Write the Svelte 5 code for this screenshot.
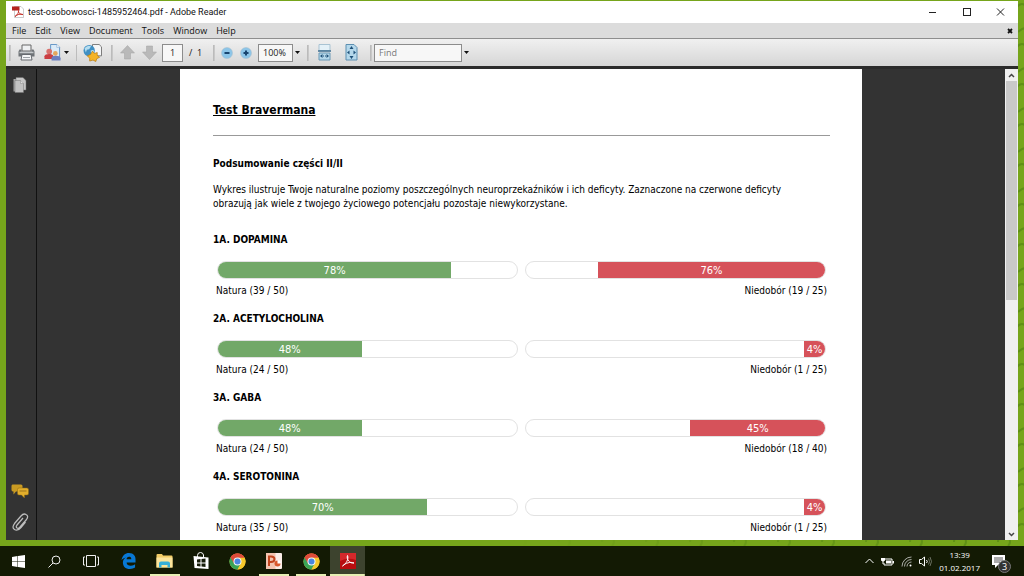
<script lang="ts">
    type Result = {
        name: string
        natura: number
        naturaPoints: string
        niedobor: number
        niedoborPoints: string
    }

    const menuItems = ['File', 'Edit', 'View', 'Document', 'Tools', 'Window', 'Help']

    const results: Result[] = [
        { name: '1A. DOPAMINA', natura: 78, naturaPoints: '39 / 50', niedobor: 76, niedoborPoints: '19 / 25' },
        { name: '2A. ACETYLOCHOLINA', natura: 48, naturaPoints: '24 / 50', niedobor: 4, niedoborPoints: '1 / 25' },
        { name: '3A. GABA', natura: 48, naturaPoints: '24 / 50', niedobor: 45, niedoborPoints: '18 / 40' },
        { name: '4A. SEROTONINA', natura: 70, naturaPoints: '35 / 50', niedobor: 4, niedoborPoints: '1 / 25' }
    ]

    let pageNumber = $state('1')
    let zoom = $state('100%')
    let query = $state('')
</script>

{#snippet chrome()}
    <svg width="17" height="17" viewBox="0 0 34 34">
        <circle cx="17" cy="17" r="16" fill="#f6c82c" />
        <path d="M17 17 L3.1 9 A16 16 0 0 1 30.9 9 Z" fill="#dd4b3a" />
        <path d="M17 17 L3.1 9 A16 16 0 0 0 17 33 L24 21 Z" fill="#3aa357" />
        <path d="M17 9 H30.9 A16 16 0 0 1 17 33 L24 21 Z" fill="#f6c82c" />
        <path d="M3.1 9 A16 16 0 0 1 30.9 9 H17 L10 21 Z" fill="#dd4b3a" />
        <circle cx="17" cy="17" r="8" fill="#f4f6f4" />
        <circle cx="17" cy="17" r="6" fill="#4a86e0" />
    </svg>
{/snippet}

{#snippet arrowDown()}
    <svg width="5" height="3" viewBox="0 0 5 3"><path d="M0 0 H5 L2.5 3 Z" fill="#111" /></svg>
{/snippet}

<div class="desktop">
    <svg class="wallpaper" width="100%" height="100%" aria-hidden="true">
        <defs>
            <pattern id="doodles" width="44" height="40" patternUnits="userSpaceOnUse">
                <path d="M4 8 q6 -8 12 0 t12 2 M30 22 a6 6 0 1 1 10 4 M6 32 q8 -8 16 0 M24 6 a5 5 0 1 0 8 -2" fill="none" stroke="#568713" stroke-width="2" />
            </pattern>
            <linearGradient id="doodleFade">
                <stop offset="0.5" stop-color="#fff" stop-opacity="0" />
                <stop offset="0.95" stop-color="#fff" stop-opacity="0.7" />
            </linearGradient>
            <mask id="fadeMask"><rect width="100%" height="100%" fill="url(#doodleFade)" /></mask>
        </defs>
        <rect width="100%" height="100%" fill="url(#doodles)" mask="url(#fadeMask)" />
    </svg>

    <main class="window">
        <header class="titleBar">
            <svg width="12" height="12" viewBox="0 0 24 24">
                <path d="M5 1 H18 L23 6 V23 H5 Z" fill="#fff" stroke="#999" />
                <rect x="0" y="1" width="15" height="8" fill="#b5231c" />
                <path d="M6 21 C11 18 14 12 13 9 C12 13 17 18 22 17 C17 15 10 17 6 21" fill="none" stroke="#c4322b" stroke-width="2" />
            </svg>
            <span class="title">test-osobowosci-1485952464.pdf - Adobe Reader</span>
            <div class="windowButtons">
                <button aria-label="Minimize"><svg width="9" height="9" viewBox="0 0 9 9"><path d="M1 4.5 H8" stroke="#222" /></svg></button>
                <button aria-label="Maximize"><svg width="9" height="9" viewBox="0 0 9 9"><rect x="1.5" y="0.5" width="7" height="7" fill="none" stroke="#222" /></svg></button>
                <button aria-label="Close"><svg width="9" height="9" viewBox="0 0 9 9"><path d="M1 0.500 L8 7.500 M8 0.500 L1 7.500" stroke="#222" /></svg></button>
            </div>
        </header>

        <nav class="menuBar">
            {#each menuItems as item}
                <button>{item}</button>
            {/each}
            <button class="closeDocument" aria-label="Close document">
                <svg width="6" height="6" viewBox="0 0 6 6"><path d="M1 1 L5 5 M5 1 L1 5" stroke="#111" stroke-width="1.8" /></svg>
            </button>
        </nav>

        <div class="toolbar">
            <span class="grip"></span>
            <button class="tool" aria-label="Print">
                <svg width="17" height="17" viewBox="0 0 34 34">
                    <path d="M8 2 H26 V14 H8 Z" fill="#eef0f2" stroke="#666" stroke-width="2" />
                    <path d="M3 11 H7 V15 H27 V11 H31 L33 15 V25 H1 V15 Z" fill="#6f7377" />
                    <path d="M3 17 H31" stroke="#c4c8cb" stroke-width="3" />
                    <path d="M8 21 H26 L28 32 H6 Z" fill="#f5f6f7" stroke="#666a6f" stroke-width="2" />
                    <path d="M10 27 H24" stroke="#9da2a7" stroke-width="2" />
                </svg>
            </button>
            <button class="tool share" aria-label="Share">
                <svg width="17" height="17" viewBox="0 0 36 36">
                    <path d="M14 1 H27 L33 7 V30 H14 Z" fill="#dcebf8" stroke="#5e90c4" stroke-width="2" />
                    <path d="M27 1 V7 H33" fill="#fff" stroke="#5e90c4" />
                    <circle cx="11" cy="16" r="6" fill="#d9706c" />
                    <path d="M1 32 V26 Q2 21 11 21 Q19 21 20 26 V32 Z" fill="#cb3e42" />
                    <circle cx="24" cy="20" r="5" fill="#e4a65d" />
                    <path d="M16 35 V30 Q17 25 25 25 Q34 25 35 30 V35 Z" fill="#6b7fc0" />
                </svg>
                {@render arrowDown()}
            </button>
            <span class="separator"></span>
            <button class="tool online" aria-label="Create PDF online">
                <svg width="19" height="18" viewBox="0 0 40 38">
                    <path d="M20 1 H34 L39 6 V25 H20 Z" fill="#f5f6f7" stroke="#777" stroke-width="2" />
                    <circle cx="13" cy="14" r="12" fill="#3f8fc3" />
                    <path d="M3 9 Q10 1 17 5 L13 11 L8 12 L6 18 Z M16 14 Q22 11 24 16 L18 23 Z" fill="#b6def0" />
                    <path d="M20 15 L24 20 L30 18 L30 24 L35 28 L29 31 L27 37 L21 34 L14 36 L14 30 L9 25 L16 22 Z" fill="#f4b326" stroke="#b97b10" stroke-width="1.5" />
                </svg>
            </button>
            <span class="grip"></span>
            <button class="tool" aria-label="Previous page">
                <svg width="15" height="15" viewBox="0 0 30 30"><path d="M15 1 L29 16 H21 V28 H9 V16 H1 Z" fill="#b9b9b9" stroke="#a3a3a3" /></svg>
            </button>
            <button class="tool" aria-label="Next page">
                <svg width="15" height="15" viewBox="0 0 30 30"><path d="M15 29 L29 14 H21 V2 H9 V14 H1 Z" fill="#b9b9b9" stroke="#a3a3a3" /></svg>
            </button>
            <input class="pageField" aria-label="Page number" bind:value={pageNumber} />
            <span class="pageCount">/&nbsp; 1</span>
            <span class="grip"></span>
            <button class="zoomButton" aria-label="Zoom out">
                <svg width="12" height="12" viewBox="0 0 24 24"><circle cx="12" cy="12" r="11" fill="#8cc5e8" stroke="#a6bccb" /><path d="M7 12 H17" stroke="#19456f" stroke-width="4" /></svg>
            </button>
            <button class="zoomButton" aria-label="Zoom in">
                <svg width="12" height="12" viewBox="0 0 24 24"><circle cx="12" cy="12" r="11" fill="#8cc5e8" stroke="#a6bccb" /><path d="M7 12 H17 M12 7 V17" stroke="#19456f" stroke-width="4" /></svg>
            </button>
            <div class="combo">
                <input class="zoomField" aria-label="Zoom" bind:value={zoom} />
                <button aria-label="Zoom levels">{@render arrowDown()}</button>
            </div>
            <span class="grip"></span>
            <button class="tool fit" aria-label="Fit width">
                <svg width="13" height="17" viewBox="0 0 26 34">
                    <path d="M2 1 H24 V13 H2 Z" fill="#e4f1f8" stroke="#a9c3d3" stroke-width="2" />
                    <path d="M0 14 H26" stroke="#3d6e91" stroke-width="3" />
                    <path d="M2 18 H24 V32 H2 Z" fill="#b5d8eb" stroke="#6998b6" stroke-width="2" />
                    <path d="M4 24 L9 20 V28 Z M22 24 L17 20 V28 Z M10 23 H12 V25 H10 Z M14 23 H16 V25 H14 Z" fill="#1e5078" />
                </svg>
            </button>
            <button class="tool fit" aria-label="Fit page">
                <svg width="13" height="17" viewBox="0 0 26 34">
                    <path d="M2 1 H18 L24 7 V32 H2 Z" fill="#b5d8eb" stroke="#5c8fb1" stroke-width="2" />
                    <path d="M13 4 L17 10 H9 Z M13 30 L17 24 H9 Z M4 17 L9 13 V21 Z M22 17 L17 13 V21 Z" fill="#1e5078" />
                </svg>
            </button>
            <span class="grip findGrip"></span>
            <div class="combo">
                <input class="findField" aria-label="Find" placeholder="Find" bind:value={query} />
                <button aria-label="Find options">{@render arrowDown()}</button>
            </div>
        </div>

        <div class="viewer">
            <aside class="sidePanel">
                <button aria-label="Pages">
                    <svg width="14" height="16" viewBox="0 0 28 32">
                        <path d="M1 4 H16 V29 H1 Z" fill="#a2a2a2" />
                        <path d="M6 1 H20 L26 7 V26 H6 Z" fill="#c6c6c6" stroke="#6a6a6a" />
                        <path d="M4 7 H15 L21 13 V31 H4 Z" fill="#c2c2c2" stroke="#777" />
                        <path d="M15 7 V13 H21" fill="#e0e0e0" stroke="#888" />
                    </svg>
                </button>
                <button class="comments" aria-label="Comments">
                    <svg width="18" height="15" viewBox="0 0 36 30">
                        <path d="M3 1 H20 Q23 1 23 4 V12 Q23 15 20 15 H10 L5 21 V15 Q1 15 1 12 V4 Q1 1 3 1" fill="#c99a22" />
                        <path d="M16 8 H32 Q35 8 35 11 V19 Q35 22 32 22 H27 V28 L21 22 H16 Q13 22 13 19 V11 Q13 8 16 8" fill="#e2ae2c" stroke="#8c6813" />
                        <path d="M17 14 H31" stroke="#9a731a" stroke-width="2" />
                    </svg>
                </button>
                <button aria-label="Attachments">
                    <svg width="17" height="18" viewBox="0 0 34 36">
                        <path d="M22 10 L10 24 Q7 28 10 30 Q13 32 16 28 L29 13 Q34 6 28 3 Q23 0 18 6 L5 21 Q-1 29 5 33 Q11 37 18 29 L27 18" fill="none" stroke="#bdbdbd" stroke-width="2.500" />
                    </svg>
                </button>
            </aside>

            <div class="canvas">
                <article class="page">
                    <h1>Test Bravermana</h1>
                    <hr />
                    <h2>Podsumowanie części II/II</h2>
                    <p class="intro">
                        Wykres ilustruje Twoje naturalne poziomy poszczególnych neuroprzekaźników i ich deficyty. Zaznaczone na czerwone deficyty
                        obrazują jak wiele z twojego życiowego potencjału pozostaje niewykorzystane.
                    </p>
                    {#each results as result}
                        <section class="result">
                            <h3>{result.name}</h3>
                            <div class="bars">
                                <div class="track">
                                    <div class="fill natura" style="width: {result.natura}%">{result.natura}%</div>
                                </div>
                                <div class="track right">
                                    <div class="fill niedobor" style="width: {result.niedobor}%">{result.niedobor}%</div>
                                </div>
                            </div>
                            <div class="captions">
                                <span>Natura ({result.naturaPoints})</span>
                                <span>Niedobór ({result.niedoborPoints})</span>
                            </div>
                        </section>
                    {/each}
                </article>
            </div>

            <div class="scrollBar">
                <button aria-label="Scroll up"><svg width="7" height="5" viewBox="0 0 7 5"><path d="M1 4 L3.500 1.500 L6 4" fill="none" stroke="#444" stroke-width="1.500" /></svg></button>
                <div class="rail"><div class="thumb"></div></div>
                <button aria-label="Scroll down"><svg width="7" height="5" viewBox="0 0 7 5"><path d="M1 1 L3.500 3.500 L6 1" fill="none" stroke="#444" stroke-width="1.500" /></svg></button>
            </div>
        </div>
    </main>

    <footer class="taskbar">
        <div class="apps">
            <button aria-label="Start">
                <svg width="13" height="13" viewBox="0 0 26 26"><path d="M0 4 L11 2 V12 H0 Z M12 2 L26 0 V12 H12 Z M0 13 H11 V24 L0 22 Z M12 13 H26 V26 L12 24 Z" fill="#fff" /></svg>
            </button>
            <button aria-label="Search">
                <svg width="13" height="13" viewBox="0 0 26 26"><circle cx="16" cy="10" r="8" fill="none" stroke="#eee" stroke-width="2" /><path d="M10 16 L1 25" stroke="#eee" stroke-width="2" /></svg>
            </button>
            <button aria-label="Task view">
                <svg width="16" height="12" viewBox="0 0 32 24"><path d="M7 1 H25 V23 H7 Z M4 4 H1 V20 H4 M28 4 H31 V20 H28" fill="none" stroke="#eee" stroke-width="2" /></svg>
            </button>
            <button aria-label="Edge">
                <svg width="15" height="16" viewBox="0 0 32 34">
                    <path d="M1 15 C3 5 9 0 17 0 C27 0 32 7 31 16 V20 H12 C12 25 16 27 21 27 C25 27 28 26 30 24 V31 C27 33 24 34 19 34 C9 34 4 28 4 20 C4 15 7 11 12 9 C8 10 4 12 1 15 M12 13 H22 C22 9 20 8 17 8 C14 8 12 10 12 13" fill="#0878d4" fill-rule="evenodd" />
                </svg>
            </button>
            <button class="open" aria-label="File Explorer">
                <svg width="17" height="14" viewBox="0 0 34 28">
                    <path d="M1 2 Q1 0 3 0 H12 L14 3 H31 Q33 3 33 5 V27 H1 Z" fill="#f1cc66" />
                    <path d="M1 7 H33 V27 H1 Z" fill="#fbe59c" />
                    <path d="M6 27 V19 Q6 15 10 15 H24 Q28 15 28 19 V27 H23 V22 H11 V27 Z" fill="#36afd8" />
                </svg>
            </button>
            <button aria-label="Store">
                <svg width="16" height="18" viewBox="0 0 32 36">
                    <path d="M9 10 V7 Q9 1 15 1 Q20 1 21 6 V10" fill="none" stroke="#fff" stroke-width="2" />
                    <path d="M1 8 L31 11 V34 L3 32 Z" fill="#fff" />
                    <path d="M8 15 L15 14 V21 H8 Z M17 14 L25 13 V21 H17 Z M8 23 H15 V29 L8 28 Z M17 23 H25 V30 L17 29 Z" fill="#161c08" />
                </svg>
            </button>
            <button aria-label="Chrome">{@render chrome()}</button>
            <button class="open" aria-label="PowerPoint">
                <svg width="16" height="16" viewBox="0 0 32 32">
                    <rect width="32" height="32" rx="2" fill="#fbeee8" />
                    <path d="M0 0 H19 V32 H0 Z" fill="#f3c4b0" />
                    <path d="M6 26 V7 H10 Q17 7 17 12 Q17 18 10 18 H6" fill="none" stroke="#c2451e" stroke-width="4" />
                    <circle cx="23" cy="21" r="6" fill="#d9582c" />
                    <path d="M23 21 V14 A7 7 0 0 1 30 21 Z" fill="#fff" />
                </svg>
            </button>
            <button class="open" aria-label="Chrome window">{@render chrome()}</button>
            <button class="open active" aria-label="Adobe Reader">
                <svg width="16" height="16" viewBox="0 0 32 32">
                    <rect width="32" height="32" rx="1" fill="#b80d10" />
                    <path d="M0 0 H32 V14 Q16 8 0 16 Z" fill="#d4282b" />
                    <path d="M5 26 C12 22 18 12 15 5 C12 12 20 22 28 20 C21 17 11 20 5 26" fill="none" stroke="#fff" stroke-width="2" />
                </svg>
            </button>
        </div>

        <div class="tray">
            <svg width="9" height="6" viewBox="0 0 9 6"><path d="M0.500 5 L4.500 1 L8.500 5" fill="none" stroke="#fff" /></svg>
            <svg width="13" height="9" viewBox="0 0 26 18">
                <path d="M8 4 H22 V16 H6 V12" fill="none" stroke="#fff" stroke-width="2" />
                <path d="M10 7 H20 V13 H10 Z M23 8 H26 V13 H23 Z M0 2 H8 V7 L5 9 V14 H3 V9 L0 7 Z" fill="#fff" />
            </svg>
            <svg width="11" height="11" viewBox="0 0 22 22">
                <path d="M2 21 A19 19 0 0 1 21 2 M7 21 A14 14 0 0 1 21 7 M12 21 A9 9 0 0 1 21 12" fill="none" stroke="#ddd" stroke-width="1.500" />
                <circle cx="19" cy="19" r="2" fill="#fff" />
            </svg>
            <svg width="13" height="11" viewBox="0 0 26 22">
                <path d="M1 7 H5 L11 2 V20 L5 15 H1 Z" fill="none" stroke="#fff" stroke-width="2" />
                <path d="M15 8 Q18 11 15 14" fill="none" stroke="#fff" stroke-width="2" />
                <path d="M19 5 Q23 11 19 17 M22 2 Q28 11 22 20" fill="none" stroke="#8a8d80" stroke-width="1.500" />
            </svg>
            <time class="clock">
                <span>13:39</span>
                <span>01.02.2017</span>
            </time>
            <button class="notifications" aria-label="Notifications">
                <svg width="13" height="13" viewBox="0 0 26 26">
                    <path d="M0 0 H26 V20 H12 L6 26 V20 H0 Z" fill="#fff" />
                    <path d="M4 6 H22 M4 10 H22 M4 14 H16" stroke="#222" stroke-width="1.500" />
                </svg>
                <span class="badge">3</span>
            </button>
        </div>
    </footer>
</div>

<style>
    :global(body) {
        margin: 0;
    }

    .desktop {
        position: relative;
        display: flex;
        flex-direction: column;
        height: 100vh;
        background-color: #76a51b;
        font-family: "Open Sans", "Noto Sans", sans-serif;
        font-size: 9px;
        color: #111;
    }

    .wallpaper {
        position: absolute;
        inset: 0;
    }

    button {
        display: flex;
        align-items: center;
        justify-content: center;
        padding: 0;
        border: none;
        background: none;
        font: inherit;
        color: inherit;
    }

    input {
        box-sizing: border-box;
        height: 18px;
        padding: 0 4px;
        border: 1px solid #8c8c8c;
        background-color: #f7f7f7;
        font: inherit;
        color: #222;
    }

    svg {
        display: block;
        flex-shrink: 0;
    }

    .window {
        position: relative;
        display: flex;
        flex: 1;
        flex-direction: column;
        min-height: 0;
        margin: 1px 6px 6px;
    }

    .titleBar {
        display: flex;
        align-items: center;
        height: 22px;
        padding: 0 1px 0 6px;
        background-color: #fff;
    }

    .title {
        flex: 1;
        padding-left: 4px;
        font-family: Roboto, "Open Sans", sans-serif;
    }

    .windowButtons {
        display: flex;
    }

    .windowButtons button {
        width: 34px;
        height: 22px;
    }

    .menuBar {
        display: flex;
        gap: 9px;
        height: 15px;
        padding: 0 5px 0 6px;
        background-color: #dcdcdc;
        border-bottom: 1px solid #8e8e8e;
        line-height: 13px;
    }

    .closeDocument {
        margin-left: auto;
    }

    .toolbar {
        display: flex;
        align-items: center;
        height: 27px;
        padding-left: 3px;
        background: linear-gradient(#f0f0f0, #d6d6d6);
        border-bottom: 3px solid #2b2b2b;
    }

    .grip {
        width: 2px;
        height: 16px;
        border-left: 1px solid #bbb;
        border-right: 1px solid #c8c8c8;
        box-sizing: border-box;
    }

    .separator {
        width: 1px;
        height: 16px;
        background-color: #bcbcbc;
    }

    .tool {
        min-width: 15px;
        margin: 0 0 0 7px;
    }

    .share {
        gap: 3px;
        margin: 0 7px 0 9px;
    }

    .online {
        margin: 0 2px 0 6px;
    }

    .tool + .grip {
        margin-left: 7px;
    }

    .pageField {
        width: 21px;
        margin-left: 5px;
        text-align: center;
    }

    .pageCount {
        width: 18px;
        padding: 0 6px;
    }

    .zoomButton {
        margin: 0 1px 0 6px;
    }

    .combo {
        display: flex;
        align-items: center;
    }

    .combo button {
        width: 9px;
        height: 18px;
    }

    .zoomField {
        width: 35px;
        margin-left: 5px;
    }

    .combo + .grip {
        margin-left: 5px;
    }

    .fit {
        margin: 0 4px 0 8px;
    }

    .findField {
        width: 88px;
        margin-left: 2px;
    }

    .findField::placeholder {
        color: #777;
        opacity: 1;
    }

    .viewer {
        display: flex;
        flex: 1;
        min-height: 0;
        background-color: #333;
    }

    .sidePanel {
        display: flex;
        flex-direction: column;
        align-items: center;
        gap: 14px;
        box-sizing: border-box;
        width: 31px;
        padding: 8px 2px 9px 0;
        border-right: 1px solid #111;
    }

    .comments {
        margin-top: auto;
    }

    .canvas {
        flex: 1;
        min-width: 0;
        overflow: hidden;
    }

    .page {
        box-sizing: border-box;
        max-width: 682px;
        min-height: 100%;
        margin: 0 auto;
        padding: 34px 32px 0 33px;
        background-color: #fff;
        font-family: "DejaVu Sans Condensed", "DejaVu Sans", sans-serif;
        font-size: 10px;
        line-height: 14px;
        color: #000;
    }

    h1 {
        margin: 0 0 17px;
        font-size: 12px;
        line-height: 15px;
        text-decoration: underline;
    }

    hr {
        height: 1px;
        margin: 0 0 21px;
        border: none;
        background-color: #999;
    }

    h2,
    h3 {
        margin: 0;
        font-size: 10px;
        line-height: 14px;
    }

    .intro {
        max-width: 600px;
        margin: 12px 0 22px;
    }

    .result {
        height: 79px;
    }

    .bars {
        display: grid;
        grid-template-columns: 1fr 1fr;
        gap: 7px;
        margin: 14px 4px 5px;
    }

    .track {
        display: flex;
        box-sizing: border-box;
        height: 18px;
        overflow: hidden;
        border: 1px solid #e2e2e2;
        border-radius: 9px;
    }

    .right {
        justify-content: flex-end;
    }

    .fill {
        box-sizing: border-box;
        min-width: 21px;
        font-size: 11px;
        line-height: 17px;
        text-align: center;
        color: #fff;
    }

    .natura {
        background-color: #72a868;
    }

    .niedobor {
        background-color: #d6525a;
    }

    .captions {
        display: flex;
        justify-content: space-between;
        margin: 0 3px;
    }

    .scrollBar {
        display: flex;
        flex-direction: column;
        width: 13px;
        background-color: #f0f0f0;
    }

    .scrollBar button {
        height: 12px;
    }

    .rail {
        flex: 1;
        padding: 0 1px;
    }

    .thumb {
        height: 49%;
        background-color: #c9c9c9;
    }

    .taskbar {
        position: relative;
        display: flex;
        justify-content: space-between;
        height: 30px;
        background-color: #131a04;
        color: #fff;
    }

    .apps {
        display: grid;
        grid-template-columns: repeat(10, 1fr);
        width: 366px;
    }

    .apps button {
        height: 30px;
        margin: 0 1px;
    }

    .open {
        background: linear-gradient(#e6efb4, #e6efb4) center bottom / 30px 2px no-repeat;
    }

    .apps .active {
        background: #3d432e linear-gradient(#e6efb4, #e6efb4) center bottom / 100% 2px no-repeat;
    }

    .tray {
        display: flex;
        align-items: center;
        gap: 7px;
        padding-right: 19px;
    }

    .clock {
        display: flex;
        flex-direction: column;
        font-size: 8px;
        line-height: 13px;
        text-align: center;
    }

    .notifications {
        position: relative;
        margin-left: 5px;
    }

    .badge {
        position: absolute;
        left: 6px;
        top: 5px;
        width: 11px;
        height: 11px;
        border: 1px solid #777;
        border-radius: 50%;
        background-color: #333;
        line-height: 11px;
        text-align: center;
    }
</style>
